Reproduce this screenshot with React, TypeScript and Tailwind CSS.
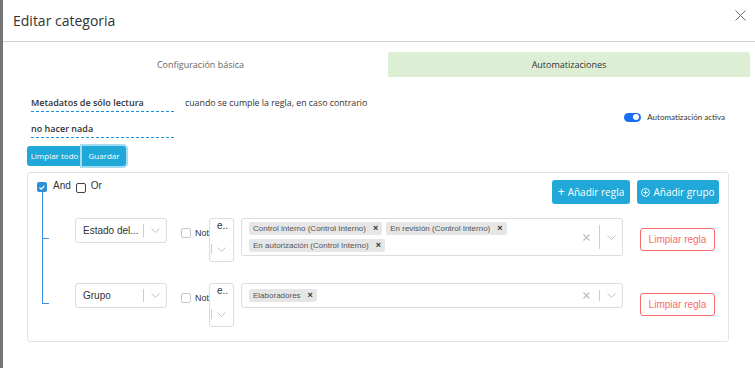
import React from "react";

// Tree connector + rule rows for the automation query builder
interface Rule {
  id: string;
  field: string;
  tags: string[];
}

const rules: Rule[] = [
  {
    id: "r1",
    field: "Estado del...",
    tags: [
      "Control interno (Control Interno)",
      "En revisión (Control Interno)",
      "En autorización (Control Interno)",
    ],
  },
  { id: "r2", field: "Grupo", tags: ["Elaboradores"] },
];

const Chevron = () => (
  <svg width="9" height="5" viewBox="0 0 9 5" fill="none">
    <path d="M0.5 0.5 L4.5 4.5 L8.5 0.5" stroke="#c4c4c4" strokeWidth="1" />
  </svg>
);

const ClearX = () => (
  <svg width="7" height="7" viewBox="0 0 7 7" fill="none">
    <path d="M0.5 0.5 L6.5 6.5 M6.5 0.5 L0.5 6.5" stroke="#bdbdbd" strokeWidth="1.2" />
  </svg>
);

const RuleRow = ({ rule, first }: { rule: Rule; first: boolean }) => {
  const tall = rule.tags.length > 1;
  return (
    <div className="relative flex items-start pl-[33px]">
      <span
        className={`absolute left-0 w-[7px] border-b border-l border-[#3f8fdc] ${
          first ? "-top-[28px] h-[49px]" : "-top-[44px] h-[65px]"
        }`}
      />
      {/* field select */}
      <div className="flex h-[25px] w-[92px] items-center rounded-[3px] border border-[#dcdcdc] bg-white pl-[7px]">
        <span className="flex-1 truncate text-[10px] text-[#333]">{rule.field}</span>
        <span className="h-[13px] w-px bg-[#ccc]" />
        <span className="flex w-[22px] justify-center">
          <Chevron />
        </span>
      </div>
      {/* not */}
      <div className="ml-[14px] mt-[10px] flex w-[28px] items-center">
        <span className="h-[10px] w-[10px] shrink-0 rounded-[2px] border border-[#c8c8c8] bg-white" />
        <span className="ml-[4px] text-[9px] leading-[10px] text-[#333]">Not</span>
      </div>
      {/* operator select (wrapped) */}
      <div className="flex h-[44px] w-[25px] flex-col rounded-[3px] border border-[#dcdcdc] bg-white">
        <span className="pl-[7px] pt-[1px] text-[10px] leading-[12px] text-[#333]">e..</span>
        <div className="mb-[7px] mt-auto flex items-center">
          <span className="ml-px h-[10px] w-px bg-[#ccc]" />
          <span className="ml-[5px]">
            <Chevron />
          </span>
        </div>
      </div>
      {/* values multi select */}
      <div
        className={`ml-[7px] flex w-[382px] items-center rounded-[3px] border border-[#dcdcdc] bg-white pl-[7px] ${
          tall ? "h-[38px]" : "h-[25px]"
        }`}
      >
        <div className="flex flex-1 flex-wrap gap-[4px]">
          {rule.tags.map((t) => (
            <span
              key={t}
              className="flex h-[13px] items-center rounded-[2px] bg-[#e6e6e6] px-[4px] text-[8px] text-[#555]"
            >
              {t}
              <span className="ml-[7px] text-[9px] font-bold text-[#333]">×</span>
            </span>
          ))}
        </div>
        <span className="mr-[9px]">
          <ClearX />
        </span>
        <span className={`w-px bg-[#ccc] ${tall ? "h-[24px]" : "h-[11px]"}`} />
        <span className="flex w-[22px] justify-center">
          <Chevron />
        </span>
      </div>
      <button className="ml-[17px] mt-[10px] h-[23px] w-[75px] rounded-[3px] border border-[#f86c6b] bg-white text-[10px] text-[#f86c6b]">
        Limpiar regla
      </button>
    </div>
  );
};

export default function App() {
  return (
    <div
      className="flex h-[368px] w-[755px] overflow-hidden bg-white text-[#333]"
      style={{ fontFamily: '"Liberation Sans", Arial, sans-serif' }}
    >
      <div className="w-[3px] bg-[#777]" />
      <div className="flex-1" style={{ fontFamily: '"Open Sans", sans-serif' }}>
        {/* header */}
        <div className="flex h-[42px] items-center justify-between border-b border-[#cfcfd4] pl-[10px] pr-[9px]">
          <h1 className="text-[14px] text-[#333]">Editar categoria</h1>
          <svg width="11" height="11" viewBox="0 0 11 11" fill="none" className="-mt-[11px]">
            <path d="M0.5 0.5 L10.5 10.5 M10.5 0.5 L0.5 10.5" stroke="#666" strokeWidth="1" />
          </svg>
        </div>

        {/* tabs */}
        <div className="mt-[10px] grid grid-cols-[375px_362px] pl-[10px] text-[9px]">
          <div className="flex h-[25px] items-center justify-center text-[#666]">Configuración básica</div>
          <div className="flex h-[25px] items-center justify-center rounded-t-[3px] bg-[#dcefd5] text-[#333]">
            Automatizaciones
          </div>
        </div>

        {/* automation settings */}
        <div className="mt-[19px] flex items-center pl-[28px] pr-[30px]">
          <div className="flex-1">
            <div className="flex items-start">
              <span className="w-[143px] border-b border-dashed border-b-[#1590e6] pb-[1px] text-[9px] font-semibold leading-[14px]">
                Metadatos de sólo lectura
              </span>
              <span className="ml-[11px] text-[8.8px] leading-[14px]">
                cuando se cumple la regla, en caso contrario
              </span>
            </div>
            <div className="mt-[10px] w-[143px] border-b border-dashed border-b-[#1590e6] pb-[1px] text-[9px] font-semibold leading-[14px]">
              no hacer nada
            </div>
          </div>
          <div className="flex items-center">
            <span className="flex h-[9px] w-[17px] items-center justify-end rounded-full bg-[#1a6ef5] pr-[2px]">
              <span className="h-[6px] w-[6px] rounded-full bg-white" />
            </span>
            <span className="ml-[6px] text-[8px]" style={{ fontFamily: "Lato, sans-serif" }}>
              Automatización activa
            </span>
          </div>
        </div>

        <div className="ml-[24px] mt-[8px] flex h-[20px] w-[99px] text-[8px] text-white">
          <button className="w-[55px] rounded-l-[3px] bg-[#20a8d8]">Limpiar todo</button>
          <button className="w-[44px] rounded-r-[3px] bg-[#20a8d8] ring-2 ring-[#a6dcf0]">Guardar</button>
        </div>

        {/* query builder group */}
        <div
          className="ml-[24px] mt-[6px] h-[170px] w-[702px] rounded-[3px] border border-[#e2e2e2] pr-[9px] pt-[7px]"
          style={{ fontFamily: '"Liberation Sans", Arial, sans-serif' }}
        >
          <div className="flex items-start justify-between">
            <div className="flex items-start pl-[9px] text-[10px]">
              <span className="mt-[2px] flex h-[10px] w-[10px] items-center justify-center rounded-[2px] bg-[#2f8ed8]">
                <svg width="6" height="5" viewBox="0 0 6 5" fill="none">
                  <path d="M0.5 2.5 L2.3 4.2 L5.5 0.8" stroke="white" strokeWidth="1.2" />
                </svg>
              </span>
              <span className="ml-[6px] leading-[11px]">And</span>
              <span className="ml-[5px] mt-[3px] h-[10px] w-[10px] rounded-[2px] border border-[#444]" />
              <span className="ml-[5px] leading-[11px]">Or</span>
            </div>
            <div className="flex gap-[7px] text-[10px] text-white" style={{ fontFamily: '"Open Sans", sans-serif' }}>
              <button className="flex h-[24px] w-[78px] items-center justify-center rounded-[3px] bg-[#20a8d8]">
                <span className="mr-[3px] text-[12px] leading-none">+</span>Añadir regla
              </button>
              <button className="flex h-[24px] w-[82px] items-center justify-center rounded-[3px] bg-[#20a8d8]">
                <svg width="9" height="9" viewBox="0 0 10 10" fill="none" className="mr-[3px]">
                  <circle cx="5" cy="5" r="4.4" stroke="white" strokeWidth="1" />
                  <path d="M5 2.6 V7.4 M2.6 5 H7.4" stroke="white" strokeWidth="1" />
                </svg>
                Añadir grupo
              </button>
            </div>
          </div>
          <div className="ml-[14px] mt-[14px] flex flex-col gap-[21px]">
            {rules.map((r, i) => (
              <RuleRow key={r.id} rule={r} first={i === 0} />
            ))}
          </div>
        </div>
      </div>
    </div>
  );
}
